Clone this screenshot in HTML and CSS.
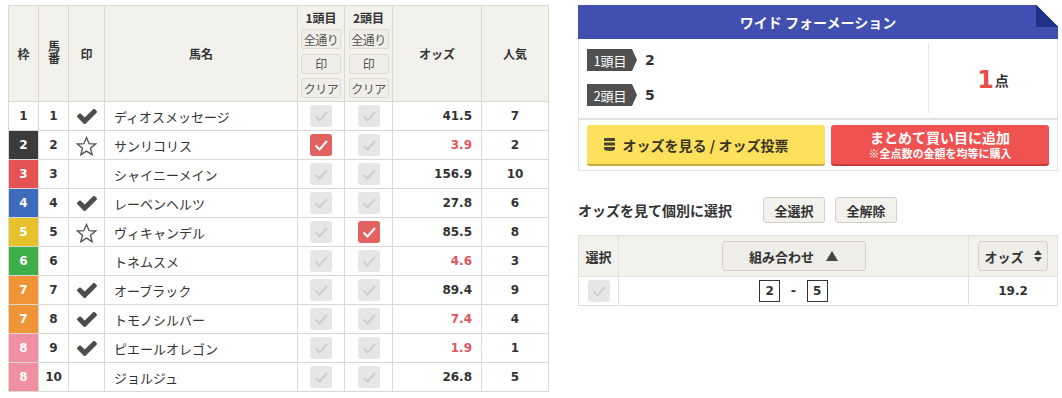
FILE: index.html
```html
<!DOCTYPE html>
<html lang="ja">
<head>
  <meta charset="UTF-8">
  <title>ワイド フォーメーション</title>
  <link rel="stylesheet" href="styles.css">
</head>
<body>

  <!-- アイコン定義 -->
  <svg class="defs" width="0" height="0">
    <symbol id="mk-check" viewBox="121 438 1550 990">
      <path d="M1671 566q0 40-28 68l-724 724-136 136q-28 28-68 28t-68-28l-136-136-362-362q-28-28-28-68t28-68l136-136q28-28 68-28t68 28l294 295 656-657q28-28 68-28t68 28l136 136q28 28 28 68z"/>
    </symbol>
    <symbol id="mk-star" viewBox="0 0 20 20">
      <polygon points="10,1.5 12.5,7.3 18.6,7.6 13.8,11.6 15.4,17.8 10,14.4 4.6,17.8 6.2,11.6 1.4,7.6 7.5,7.3" fill="none" stroke="#555" stroke-width="1.3" stroke-linejoin="miter"/>
    </symbol>
    <symbol id="tick" viewBox="0 0 22 22">
      <polyline points="5.5,11.5 9.5,15.5 17,7" fill="none" stroke-width="2"/>
    </symbol>
  </svg>

  <div class="page">

    <!-- 出馬表 -->
    <table class="entries">
      <colgroup>
        <col style="width:30px"><col style="width:30px"><col style="width:36px"><col style="width:193px">
        <col style="width:47px"><col style="width:48px"><col style="width:89px"><col style="width:67px">
      </colgroup>
      <thead>
        <tr>
          <th>枠</th>
          <th><span class="vertical">馬番</span></th>
          <th>印</th>
          <th>馬名</th>
          <th class="pick">
            <div class="pick-title">1頭目</div>
            <button class="mini">全通り</button>
            <button class="mini">印</button>
            <button class="mini">クリア</button>
          </th>
          <th class="pick">
            <div class="pick-title">2頭目</div>
            <button class="mini">全通り</button>
            <button class="mini">印</button>
            <button class="mini">クリア</button>
          </th>
          <th>オッズ</th>
          <th>人気</th>
        </tr>
      </thead>
      <tbody>
        <tr>
          <td class="waku w1">1</td><td class="num">1</td>
          <td><svg class="mark"><use href="#mk-check"/></svg></td>
          <td class="name">ディオスメッセージ</td>
          <td><span class="cb"><svg><use href="#tick"/></svg></span></td>
          <td><span class="cb"><svg><use href="#tick"/></svg></span></td>
          <td class="odds">41.5</td><td class="num">7</td>
        </tr>
        <tr>
          <td class="waku w2">2</td><td class="num">2</td>
          <td><svg class="star"><use href="#mk-star"/></svg></td>
          <td class="name">サンリコリス</td>
          <td><span class="cb on"><svg><use href="#tick"/></svg></span></td>
          <td><span class="cb"><svg><use href="#tick"/></svg></span></td>
          <td class="odds hot">3.9</td><td class="num">2</td>
        </tr>
        <tr>
          <td class="waku w3">3</td><td class="num">3</td>
          <td></td>
          <td class="name">シャイニーメイン</td>
          <td><span class="cb"><svg><use href="#tick"/></svg></span></td>
          <td><span class="cb"><svg><use href="#tick"/></svg></span></td>
          <td class="odds">156.9</td><td class="num">10</td>
        </tr>
        <tr>
          <td class="waku w4">4</td><td class="num">4</td>
          <td><svg class="mark"><use href="#mk-check"/></svg></td>
          <td class="name">レーベンヘルツ</td>
          <td><span class="cb"><svg><use href="#tick"/></svg></span></td>
          <td><span class="cb"><svg><use href="#tick"/></svg></span></td>
          <td class="odds">27.8</td><td class="num">6</td>
        </tr>
        <tr>
          <td class="waku w5">5</td><td class="num">5</td>
          <td><svg class="star"><use href="#mk-star"/></svg></td>
          <td class="name">ヴィキャンデル</td>
          <td><span class="cb"><svg><use href="#tick"/></svg></span></td>
          <td><span class="cb on"><svg><use href="#tick"/></svg></span></td>
          <td class="odds">85.5</td><td class="num">8</td>
        </tr>
        <tr>
          <td class="waku w6">6</td><td class="num">6</td>
          <td></td>
          <td class="name">トネムスメ</td>
          <td><span class="cb"><svg><use href="#tick"/></svg></span></td>
          <td><span class="cb"><svg><use href="#tick"/></svg></span></td>
          <td class="odds hot">4.6</td><td class="num">3</td>
        </tr>
        <tr>
          <td class="waku w7">7</td><td class="num">7</td>
          <td><svg class="mark"><use href="#mk-check"/></svg></td>
          <td class="name">オーブラック</td>
          <td><span class="cb"><svg><use href="#tick"/></svg></span></td>
          <td><span class="cb"><svg><use href="#tick"/></svg></span></td>
          <td class="odds">89.4</td><td class="num">9</td>
        </tr>
        <tr>
          <td class="waku w7">7</td><td class="num">8</td>
          <td><svg class="mark"><use href="#mk-check"/></svg></td>
          <td class="name">トモノシルバー</td>
          <td><span class="cb"><svg><use href="#tick"/></svg></span></td>
          <td><span class="cb"><svg><use href="#tick"/></svg></span></td>
          <td class="odds hot">7.4</td><td class="num">4</td>
        </tr>
        <tr>
          <td class="waku w8">8</td><td class="num">9</td>
          <td><svg class="mark"><use href="#mk-check"/></svg></td>
          <td class="name">ピエールオレゴン</td>
          <td><span class="cb"><svg><use href="#tick"/></svg></span></td>
          <td><span class="cb"><svg><use href="#tick"/></svg></span></td>
          <td class="odds hot">1.9</td><td class="num">1</td>
        </tr>
        <tr>
          <td class="waku w8">8</td><td class="num">10</td>
          <td></td>
          <td class="name">ジョルジュ</td>
          <td><span class="cb"><svg><use href="#tick"/></svg></span></td>
          <td><span class="cb"><svg><use href="#tick"/></svg></span></td>
          <td class="odds">26.8</td><td class="num">5</td>
        </tr>
      </tbody>
    </table>

    <!-- フォーメーション -->
    <div class="side">
      <div class="formation">
        <div class="formation-head">ワイド フォーメーション</div>
        <div class="formation-body">
          <div class="legs">
            <div class="leg"><span class="tag">1頭目</span><span class="leg-val">2</span></div>
            <div class="leg"><span class="tag">2頭目</span><span class="leg-val">5</span></div>
          </div>
          <div class="count"><span class="count-num">1</span>点</div>
        </div>
        <div class="formation-actions">
          <button class="btn-odds">
            <svg class="coin" viewBox="0 0 11 13"><rect x="0" y="0" width="11" height="3" rx="0.5"/><rect x="0" y="4.5" width="11" height="3" rx="0.5"/><path d="M0 9h11v1.5q0 2.5-5.5 2.5t-5.5-2.5z"/></svg>
            オッズを見る / オッズ投票
          </button>
          <button class="btn-add">まとめて買い目に追加<small>※全点数の金額を均等に購入</small></button>
        </div>
      </div>

      <div class="pick-bar">
        <h3>オッズを見て個別に選択</h3>
        <button class="plain">全選択</button>
        <button class="plain">全解除</button>
      </div>

      <table class="combos">
        <colgroup><col style="width:40px"><col><col style="width:89px"></colgroup>
        <thead>
          <tr>
            <th>選択</th>
            <th><button class="sort wide">組み合わせ <svg class="tri" viewBox="0 0 12 10"><polygon points="6,0 12,10 0,10"/></svg></button></th>
            <th><button class="sort">オッズ <svg class="updown" viewBox="0 0 8 12"><polygon points="4,0 8,5 0,5"/><polygon points="0,7 8,7 4,12"/></svg></button></th>
          </tr>
        </thead>
        <tbody>
          <tr>
            <td><span class="cb"><svg><use href="#tick"/></svg></span></td>
            <td class="pair"><span class="box">2</span> - <span class="box">5</span></td>
            <td class="num">19.2</td>
          </tr>
        </tbody>
      </table>
    </div>

  </div>
</body>
</html>
```

FILE: styles.css
```css
html, body {
  margin: 0;
  padding: 0;
  background: #fff;
}
body {
  font-family: "DejaVu Sans", "Noto Sans CJK JP", sans-serif;
  font-size: 13px;
  color: #333;
}
.defs {
  position: absolute;
  width: 0;
  height: 0;
}
button {
  font-family: inherit;
  cursor: pointer;
}

/* レイアウト */
.page {
  display: flex;
  align-items: flex-start;
  gap: 29px;
  padding: 5px 0 0 8px;
}

/* 出馬表 */
.entries {
  border-collapse: collapse;
  table-layout: fixed;
  width: 541px;
}
.entries th,
.entries td {
  border: 1px solid #dbd8cd;
  padding: 0;
  text-align: center;
  vertical-align: middle;
}
.entries th {
  background: #f2f1ec;
  height: 95px;
  font-family: "Noto Sans CJK JP", sans-serif;
  font-size: 12px;
  font-weight: bold;
}
.vertical {
  display: inline-block;
  writing-mode: vertical-rl;
  font-size: 12px;
  line-height: 14px;
}
.entries th.pick {
  vertical-align: top;
}
.pick-title {
  font-size: 12px;
  line-height: 16px;
  padding-top: 4px;
  margin-bottom: 3px;
}
.mini {
  display: block;
  width: 40px;
  height: 20px;
  margin: 0 auto 4.5px;
  padding: 0;
  border: 1px solid #dedbd1;
  border-radius: 3px;
  background: #f0eee9;
  font-family: "Noto Sans CJK JP", sans-serif;
  font-size: 12px;
  letter-spacing: -0.5px;
  color: #555;
}
.mini:last-child {
  margin-bottom: 0;
}
.entries td {
  height: 28px;
  font-size: 12px;
  font-weight: bold;
}
.entries td.name {
  text-align: left;
  padding-left: 9px;
  font-family: "Noto Sans CJK JP", sans-serif;
  font-size: 13px;
  font-weight: normal;
}
.entries td.odds {
  text-align: right;
  padding-right: 9px;
}
.hot {
  color: #e3555f;
}

.waku { color: #fff; }
.w1 { color: #333; background: #fff; }
.w2 { background: #3b3b3b; }
.w3 { background: #e45253; }
.w4 { background: #3e6cbd; }
.w5 { background: #e6c12c; }
.w6 { background: #3eae4a; }
.w7 { background: #ef9538; }
.w8 { background: #ef8fa1; }

.mark {
  display: block;
  width: 20px;
  height: 15px;
  margin: 1px auto 0;
  fill: #4d4d4d;
}
.star {
  display: block;
  width: 21px;
  height: 21px;
  margin: 2px auto 0;
}

/* チェックボックス */
.cb {
  display: inline-block;
  width: 22px;
  height: 22px;
  border-radius: 3px;
  background: #e6e6e6;
  vertical-align: middle;
}
.cb svg {
  display: block;
  width: 22px;
  height: 22px;
  stroke: #cfcfcf;
}
.cb.on {
  background: #e26262;
}
.cb.on svg {
  stroke: #fff;
  stroke-width: 1.4;
}

/* 右側 */
.side {
  width: 480px;
}
.formation-head {
  position: relative;
  height: 34px;
  line-height: 34px;
  background: #4150b0;
  color: #fff;
  font-family: "Noto Sans CJK JP", sans-serif;
  font-size: 14px;
  font-weight: bold;
  text-align: center;
}
.formation-head::after {
  content: "";
  position: absolute;
  top: 0;
  right: 0;
  width: 22px;
  height: 22px;
  background: linear-gradient(to bottom left, #fff 50%, #233089 50%);
}
.formation-body {
  display: flex;
  border: 1px solid #e2e2e2;
  border-top: none;
  height: 79px;
}
.legs {
  flex: 1;
  display: flex;
  flex-direction: column;
  gap: 13px;
  padding: 10px 0 0 8px;
}
.leg {
  display: flex;
  align-items: center;
  gap: 8px;
}
.tag {
  display: inline-flex;
  align-items: center;
  justify-content: center;
  box-sizing: border-box;
  width: 50px;
  height: 22px;
  padding-right: 4px;
  background: #505050;
  color: #fff;
  font-family: "Noto Sans CJK JP", sans-serif;
  font-size: 13px;
  clip-path: polygon(0 0, calc(100% - 5px) 0, 100% 50%, calc(100% - 5px) 100%, 0 100%);
}
.leg-val {
  font-size: 14px;
  font-weight: bold;
}
.count {
  width: 128px;
  margin: 4px 0 5px;
  border-left: 1px solid #e6e6e6;
  display: flex;
  align-items: center;
  justify-content: center;
  padding-top: 4px;
  font-family: "Noto Sans CJK JP", sans-serif;
  font-size: 14px;
  font-weight: bold;
}
.count-num {
  font-family: "DejaVu Sans", sans-serif;
  font-size: 24px;
  color: #e84d4d;
  margin-right: 1px;
}
.formation-actions {
  display: flex;
  gap: 6px;
  padding: 5px 8px 4px;
  border: 1px solid #e2e2e2;
}
.formation-actions button {
  flex: 1 1 0;
  min-width: 0;
  height: 41px;
  border: none;
  border-radius: 3px;
  font-family: "Noto Sans CJK JP", sans-serif;
  font-weight: bold;
}
.btn-odds {
  display: flex;
  align-items: center;
  justify-content: center;
  gap: 8px;
  padding: 0 20px 0 0;
  background: #fde05b;
  border-bottom: 2px solid #c9aa3c !important;
  color: #3a3424;
  font-size: 14px;
}
.coin {
  width: 11px;
  height: 13px;
  fill: #4a4230;
}
.btn-add {
  padding: 0;
  background: #ef5251;
  border-bottom: 2px solid #c93b3b !important;
  color: #fff;
  font-size: 14px;
  line-height: 18px;
}
.btn-add small {
  display: block;
  font-size: 11px;
  line-height: 15px;
}

.pick-bar {
  display: flex;
  align-items: center;
  margin-top: 26px;
}
.pick-bar h3 {
  margin: 0 31px 0 0;
  font-family: "Noto Sans CJK JP", sans-serif;
  font-size: 14px;
  font-weight: bold;
}
.plain {
  width: 62px;
  height: 26px;
  margin-right: 10px;
  padding: 0;
  border: 1px solid #d2d0ca;
  border-radius: 3px;
  background: #f2f1ec;
  font-family: "Noto Sans CJK JP", sans-serif;
  font-size: 13px;
  font-weight: bold;
  color: #333;
}

/* 組み合わせ */
.combos {
  margin-top: 12px;
  width: 480px;
  border-collapse: collapse;
  table-layout: fixed;
}
.combos th,
.combos td {
  border: 1px solid #e0e0e0;
  padding: 0;
  text-align: center;
}
.combos th {
  height: 40px;
  background: #f2f1ec;
  font-family: "Noto Sans CJK JP", sans-serif;
  font-size: 13px;
}
.combos td {
  height: 28px;
}
.combos td.num {
  font-size: 12px;
  font-weight: bold;
}
.sort {
  display: inline-flex;
  align-items: center;
  justify-content: center;
  gap: 10px;
  width: 70px;
  height: 30px;
  padding: 0;
  border: 1px solid #d6d3cc;
  border-radius: 3px;
  background: #efede8;
  font-family: "Noto Sans CJK JP", sans-serif;
  font-size: 13px;
  font-weight: bold;
  color: #333;
}
.sort.wide {
  width: 144px;
  gap: 12px;
}
.tri {
  width: 12px;
  height: 10px;
  fill: #444;
}
.updown {
  width: 8px;
  height: 12px;
  fill: #444;
}
.pair {
  font-size: 13px;
  font-weight: bold;
}
.box {
  display: inline-block;
  width: 19px;
  height: 20px;
  line-height: 20px;
  margin: 0 6px;
  border: 1px solid #333;
  font-size: 12px;
}
```
